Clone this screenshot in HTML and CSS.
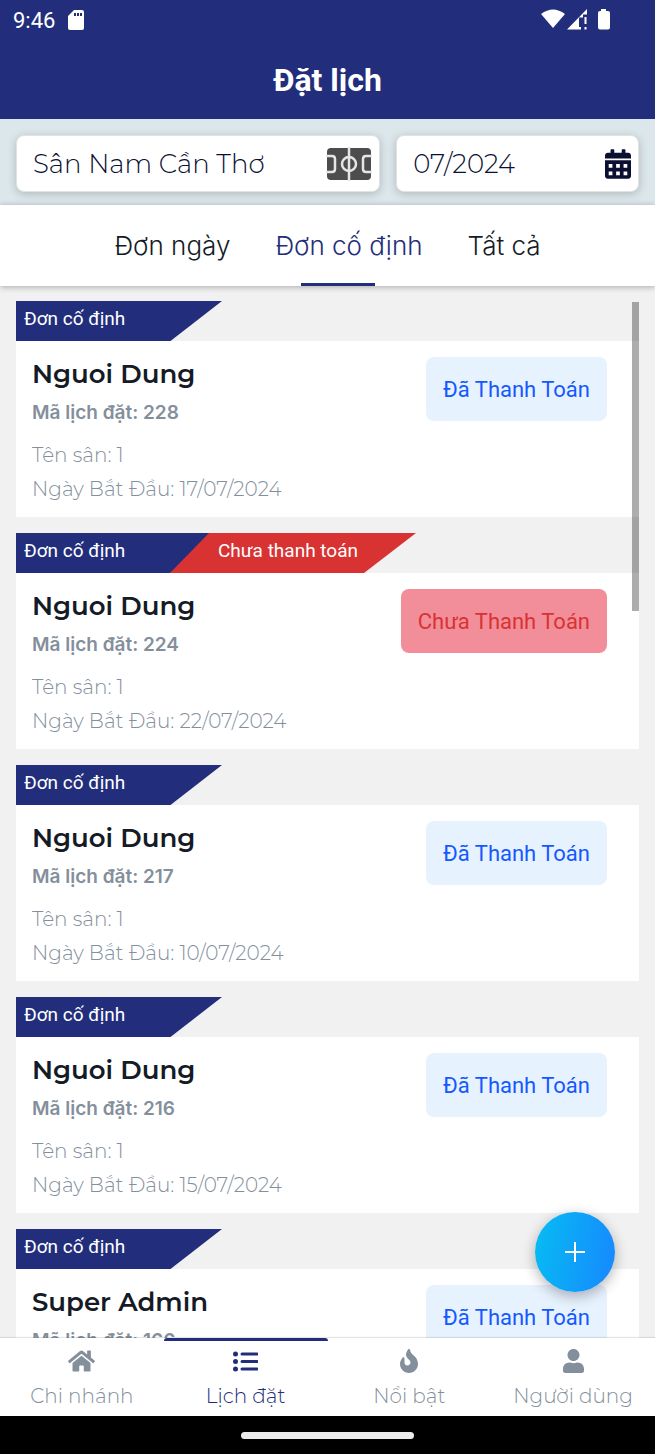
FILE: index.html
```html
<!DOCTYPE html>
<html lang="vi">
    <head>
        <meta charset="utf-8">
        <meta name="viewport" content="width=device-width, initial-scale=1.0">
        <title>Đặt lịch</title>
        <link rel="stylesheet" href="styles.css">
    </head>
    <body>
        <header class="top">
            <div class="status-bar">
                <span>9:46</span>
                <svg class="sd-icon" viewBox="0 0 16 20"><path fill="#fff" fill-rule="evenodd" d="M6 0h8q2 0 2 2v16q0 2-2 2H2q-2 0-2-2V6zM6 3v3h2V3zM9 3v3h2V3zM12 3v3h2V3z"/></svg>
                <svg class="signal-icons" viewBox="0 0 70 22">
                    <g fill="#fff">
                        <path d="M0 5Q12 -4 24 5L12 19z"/>
                        <path d="M26 20.500L46 0v5.500h-4v3h-4v9.500h2v2.500z"/>
                        <path d="M43.500 8h2v7h-2zM43.500 18h2v2.500h-2z"/>
                        <path d="M60 0h5v2h2q2 0 2 2v14.500q0 2-2 2h-8q-2 0-2-2V4q0-2 2-2h1z"/>
                    </g>
                </svg>
            </div>
            <h1>Đặt lịch</h1>
        </header>
        <form class="filters">
            <div class="field">
                <select aria-label="Chi nhánh">
                    <option>Sân Nam Cần Thơ</option>
                </select>
                <svg class="pitch-icon" viewBox="0 0 46 34">
                    <rect x="1" y="1" width="44" height="32" rx="4" fill="#4d4d4d"/>
                    <g fill="none" stroke="#e6e6e6" stroke-width="2.500">
                        <path d="M23 0v34"/>
                        <circle cx="23" cy="17" r="7"/>
                        <path d="M0 9h6q3 0 3 3v10q0 3-3 3H0M46 9h-6q-3 0-3 3v10q0 3 3 3h6"/>
                    </g>
                </svg>
            </div>
            <div class="field">
                <input type="text" value="07/2024" aria-label="Tháng">
                <svg class="calendar-icon" viewBox="0 0 448 512">
                    <path fill="#0b1033" fill-rule="evenodd" d="M400 64h-48V16c0-8.800-7.200-16-16-16h-32c-8.800 0-16 7.200-16 16v48H160V16c0-8.800-7.200-16-16-16h-32c-8.800 0-16 7.200-16 16v48H48C21.500 64 0 85.500 0 112v48h448v-48c0-26.500-21.500-48-48-48zM0 464c0 26.500 21.500 48 48 48h352c26.500 0 48-21.500 48-48V192H0zM64 256h64v64H64zM192 256h64v64h-64zM320 256h64v64h-64zM64 384h64v64H64zM192 384h64v64h-64zM320 384h64v64h-64z"/>
                </svg>
            </div>
        </form>
        <div class="tabs">
            <button type="button">Đơn ngày</button>
            <button type="button" class="active">Đơn cố định</button>
            <button type="button">Tất cả</button>
        </div>
        <main>
            <div class="list">
                <article>
                    <div class="ribbons"><span class="ribbon">Đơn cố định</span></div>
                    <div class="card">
                        <div>
                            <h2>Nguoi Dung</h2>
                            <p class="code">Mã lịch đặt: 228</p>
                            <p>Tên sân: 1</p>
                            <p>Ngày Bắt Đầu: 17/07/2024</p>
                        </div>
                        <button type="button" class="pay">Đã Thanh Toán</button>
                    </div>
                </article>
                <article>
                    <div class="ribbons"><span class="ribbon">Đơn cố định</span><span class="ribbon unpaid">Chưa thanh toán</span></div>
                    <div class="card">
                        <div>
                            <h2>Nguoi Dung</h2>
                            <p class="code">Mã lịch đặt: 224</p>
                            <p>Tên sân: 1</p>
                            <p>Ngày Bắt Đầu: 22/07/2024</p>
                        </div>
                        <button type="button" class="pay pay-unpaid">Chưa Thanh Toán</button>
                    </div>
                </article>
                <article>
                    <div class="ribbons"><span class="ribbon">Đơn cố định</span></div>
                    <div class="card">
                        <div>
                            <h2>Nguoi Dung</h2>
                            <p class="code">Mã lịch đặt: 217</p>
                            <p>Tên sân: 1</p>
                            <p>Ngày Bắt Đầu: 10/07/2024</p>
                        </div>
                        <button type="button" class="pay">Đã Thanh Toán</button>
                    </div>
                </article>
                <article>
                    <div class="ribbons"><span class="ribbon">Đơn cố định</span></div>
                    <div class="card">
                        <div>
                            <h2>Nguoi Dung</h2>
                            <p class="code">Mã lịch đặt: 216</p>
                            <p>Tên sân: 1</p>
                            <p>Ngày Bắt Đầu: 15/07/2024</p>
                        </div>
                        <button type="button" class="pay">Đã Thanh Toán</button>
                    </div>
                </article>
                <article>
                    <div class="ribbons"><span class="ribbon">Đơn cố định</span></div>
                    <div class="card">
                        <div>
                            <h2>Super Admin</h2>
                            <p class="code">Mã lịch đặt: 166</p>
                        </div>
                        <button type="button" class="pay">Đã Thanh Toán</button>
                    </div>
                </article>
            </div>
            <div class="scroll-thumb"></div>
            <button type="button" class="add" aria-label="Thêm">
                <svg viewBox="0 0 20 20"><path d="M10 0v20M0 10h20" stroke="#fff" stroke-width="2"/></svg>
            </button>
        </main>
        <nav>
            <a href="#">
                <svg viewBox="0 0 576 512"><path fill="currentColor" d="M280.370 148.260L96 300.110V464a16 16 0 0 0 16 16l112.060-.290a16 16 0 0 0 15.920-16V368a16 16 0 0 1 16-16h64a16 16 0 0 1 16 16v95.640a16 16 0 0 0 16 16.050L464 480a16 16 0 0 0 16-16V300L295.670 148.260a12.190 12.190 0 0 0-15.300 0zM571.600 251.470L488 182.560V44.050a12 12 0 0 0-12-12h-56a12 12 0 0 0-12 12v72.610L318.470 43a48 48 0 0 0-61 0L4.340 251.470a12 12 0 0 0-1.600 16.900l25.500 31A12 12 0 0 0 45.150 301l235.220-193.740a12.190 12.190 0 0 1 15.300 0L530.900 301a12 12 0 0 0 16.900-1.600l25.500-31a12 12 0 0 0-1.700-16.930z"/></svg>
                Chi nhánh
            </a>
            <a href="#" class="active">
                <svg viewBox="0 0 25 24"><path d="M9 5h15M9 12.500h15M9 20h15" stroke="currentColor" stroke-width="3" stroke-linecap="round"/><g fill="currentColor"><circle cx="2.500" cy="5" r="2.500"/><circle cx="2.500" cy="12.500" r="2.500"/><circle cx="2.500" cy="20" r="2.500"/></g></svg>
                Lịch đặt
            </a>
            <a href="#">
                <svg viewBox="0 0 384 512"><path fill="currentColor" d="M216 23.860c0-23.800-30.650-32.770-44.150-13.040C48 191.850 224 200 224 288c0 35.630-29.110 64.460-64.850 63.990-35.170-.450-63.150-29.770-63.150-64.940v-85.510c0-21.700-26.470-32.230-41.430-16.500C27.800 213.160 0 261.330 0 320c0 105.870 86.130 192 192 192s192-86.130 192-192c0-170.290-168-193-168-296.140z"/></svg>
                Nổi bật
            </a>
            <a href="#">
                <svg viewBox="0 0 448 512"><path fill="currentColor" d="M224 256c70.700 0 128-57.300 128-128S294.700 0 224 0 96 57.300 96 128s57.300 128 128 128zm89.600 32h-16.700c-22.200 10.200-46.900 16-72.900 16s-50.600-5.800-72.900-16h-16.700C60.200 288 0 348.200 0 422.400V464c0 26.500 21.500 48 48 48h352c26.500 0 48-21.500 48-48v-41.600c0-74.200-60.200-134.400-134.400-134.400z"/></svg>
                Người dùng
            </a>
        </nav>
        <footer><div class="home-bar"></div></footer>
    </body>
</html>
```

FILE: styles.css
```css
* {
    box-sizing: border-box;
}

body {
    margin: 0;
    height: 100vh;
    display: flex;
    flex-direction: column;
    background-color: #f1f1f1;
    color: #151b26;
    font-family: Montserrat, Inter, sans-serif;
    overflow: hidden;
}

button, input, select {
    margin: 0;
    border: none;
    background: none;
    font: inherit;
    color: inherit;
}

svg {
    display: block;
}

.top {
    background-color: #222e7b;
    color: white;
    font-family: Roboto, sans-serif;
}

.status-bar {
    height: 40px;
    display: flex;
    align-items: center;
    gap: 13px;
    padding: 0 44px 0 13px;
    font-size: 22px;
}

.sd-icon {
    width: 16px;
    height: 20px;
}

.signal-icons {
    width: 70px;
    height: 22px;
    margin-left: auto;
}

h1 {
    margin: 0;
    height: 79px;
    font-size: 32px;
    font-weight: 700;
    line-height: 80px;
    text-align: center;
}

.filters {
    display: grid;
    grid-template-columns: minmax(0, 3fr) minmax(0, 2fr);
    gap: 16px;
    padding: 16px 16px 13px;
    background-color: #dce7eb;
}

.field {
    height: 57px;
    display: flex;
    align-items: center;
    padding: 0 7px 0 16px;
    border: 1px solid #dfe3e4;
    border-radius: 8px;
    background-color: white;
    box-shadow: 0 2px 10px rgba(0, 0, 0, 0.2);
    color: #0b1033;
    font-size: 26px;
    font-weight: 300;
}

.field input, .field select {
    flex: 1;
    min-width: 0;
    padding: 0;
    appearance: none;
    outline: none;
}

.pitch-icon {
    width: 46px;
    height: 34px;
}

.calendar-icon {
    width: 26px;
    height: 30px;
}

.tabs {
    height: 81px;
    display: flex;
    justify-content: center;
    gap: 45px;
    flex-shrink: 0;
    background-color: white;
    box-shadow: 0 1px 6px rgba(0, 0, 0, 0.3);
    z-index: 1;
}

.tabs button {
    padding: 0;
    font-family: Inter, sans-serif;
    font-size: 26px;
    font-weight: 300;
}

.tabs .active {
    color: #222e7b;
    background: linear-gradient(#222e7b, #222e7b) 26px bottom / 50% 3px no-repeat;
}

main {
    flex: 1;
    min-height: 0;
    position: relative;
}

.list {
    height: 100%;
    display: flex;
    flex-direction: column;
    gap: 16px;
    padding: 15px 16px 0;
    overflow: hidden;
}

article {
    flex-shrink: 0;
}

.ribbons {
    height: 40px;
    display: flex;
}

.ribbon {
    width: 206px;
    padding-left: 8px;
    background-color: #222e7b;
    clip-path: polygon(0 0, 100% 0, 75% 100%, 0 100%);
    color: white;
    font-family: Roboto, sans-serif;
    font-size: 19px;
    line-height: 36px;
}

.unpaid {
    width: 246px;
    margin-left: -52px;
    padding-left: 48px;
    background-color: #d93232;
    clip-path: polygon(39px 0, 100% 0, 194px 100%, 0 100%);
}

.card {
    height: 176px;
    display: flex;
    justify-content: space-between;
    align-items: flex-start;
    padding: 16px 32px 0 16px;
    background-color: white;
}

h2 {
    margin: 0 0 5px;
    font-size: 26px;
    font-weight: 600;
    line-height: 34px;
}

.card p {
    margin: 0;
    color: #848f9c;
    font-size: 20px;
    font-weight: 300;
    line-height: 34px;
}

.card .code {
    margin-bottom: 8px;
    font-family: Inter, sans-serif;
    font-size: 19px;
    font-weight: 600;
}

.pay {
    height: 64px;
    padding: 0 17px;
    border-radius: 8px;
    background-color: #e7f2ff;
    color: #1558ff;
    font-family: Roboto, sans-serif;
    font-size: 22px;
}

.pay-unpaid {
    background-color: #f28e9a;
    color: #d93232;
}

.scroll-thumb {
    position: absolute;
    top: 16px;
    right: 16px;
    width: 7px;
    height: 309px;
    background-color: rgba(0, 0, 0, 0.32);
}

.add {
    position: absolute;
    right: 40px;
    bottom: 46px;
    width: 80px;
    height: 80px;
    display: flex;
    align-items: center;
    justify-content: center;
    border-radius: 50%;
    background: linear-gradient(100deg, #06bdf2, #1787ff);
    box-shadow: 0 4px 14px rgba(0, 0, 0, 0.3);
}

.add svg {
    width: 20px;
    height: 20px;
}

nav {
    height: 78px;
    display: flex;
    flex-shrink: 0;
    background-color: white;
    box-shadow: 0 -1px 1px rgba(0, 0, 0, 0.1);
    z-index: 1;
}

nav a {
    flex: 1 0 0;
    display: flex;
    flex-direction: column;
    align-items: center;
    gap: 8px;
    padding-top: 8px;
    border-top: 3px solid transparent;
    color: #848f9c;
    font-size: 20px;
    font-weight: 300;
    line-height: 30px;
    text-decoration: none;
    white-space: nowrap;
}

nav .active {
    border-color: #222e7b;
    border-radius: 3px 3px 0 0;
    color: #222e7b;
}

nav svg {
    height: 24px;
}

footer {
    height: 38px;
    display: flex;
    align-items: center;
    justify-content: center;
    flex-shrink: 0;
    background-color: black;
}

.home-bar {
    width: 173px;
    height: 7px;
    border-radius: 4px;
    background-color: #ececec;
}
```
